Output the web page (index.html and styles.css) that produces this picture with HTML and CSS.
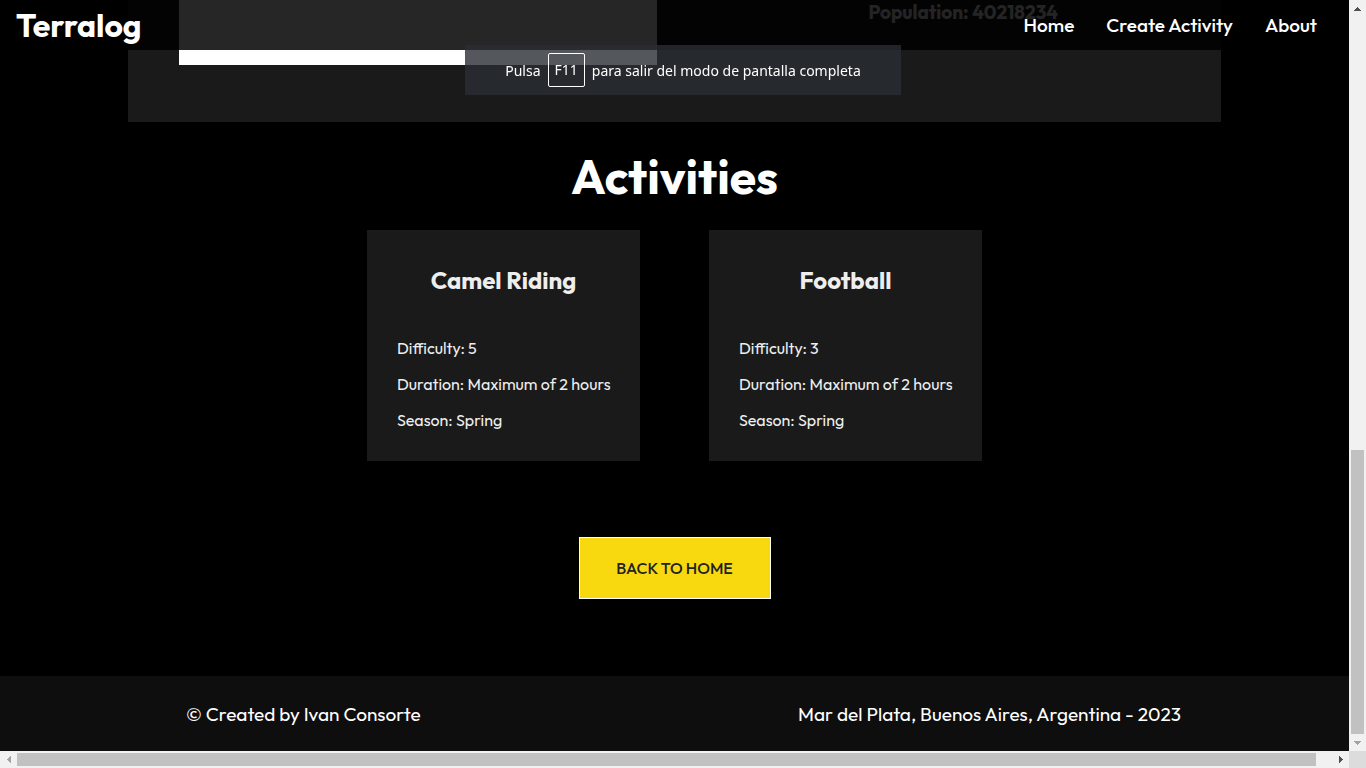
FILE: index.html
```html
<!DOCTYPE html>
<html lang="en">
<head>
<meta charset="utf-8">
<title>Terralog</title>
<link rel="stylesheet" href="styles.css">
</head>
<body>
<div class="window">
  <div class="viewport">
    <header class="navbar">
      <a class="brand" href="#">Terralog</a>
      <nav class="nav">
        <a href="#">Home</a>
        <a href="#">Create Activity</a>
        <a href="#">About</a>
      </nav>
    </header>
    <main class="page">
      <section class="country">
        <div class="flag"></div>
        <p class="population">Population: 40218234</p>
      </section>
      <section class="activities">
        <h2 class="activities-title">Activities</h2>
        <div class="cards">
          <article class="card">
            <h3 class="card-title">Camel Riding</h3>
            <p>Difficulty: 5</p>
            <p>Duration: Maximum of 2 hours</p>
            <p>Season: Spring</p>
          </article>
          <article class="card">
            <h3 class="card-title">Football</h3>
            <p>Difficulty: 3</p>
            <p>Duration: Maximum of 2 hours</p>
            <p>Season: Spring</p>
          </article>
        </div>
        <button class="back" type="button">BACK TO HOME</button>
      </section>
    </main>
    <footer class="footer">
      <span>© Created by Ivan Consorte</span>
      <span>Mar del Plata, Buenos Aires, Argentina - 2023</span>
    </footer>
  </div>
  <div class="bar bar-y">
    <button class="arrow" type="button" aria-label="Scroll up"><svg width="7" height="4" viewBox="0 0 7 4" shape-rendering="crispEdges"><path d="M3 0h1v1h1v1h1v1h1v1H0V3h1V2h1V1h1z" fill="#505050"/></svg></button>
    <div class="track"><div class="thumb"></div></div>
    <button class="arrow" type="button" aria-label="Scroll down"><svg width="7" height="4" viewBox="0 0 7 4" shape-rendering="crispEdges"><path d="M0 0h7v1H6v1H5v1H4v1H3V3H2V2H1V1H0z" fill="#a3a3a3"/></svg></button>
  </div>
  <div class="bar bar-x">
    <button class="arrow" type="button" aria-label="Scroll left"><svg width="4" height="7" viewBox="0 0 4 7" shape-rendering="crispEdges"><path d="M0 3h1V2h1V1h1V0h1v7H3V6H2V5H1V4H0z" fill="#a3a3a3"/></svg></button>
    <div class="track"><div class="thumb"></div></div>
    <button class="arrow" type="button" aria-label="Scroll right"><svg width="4" height="7" viewBox="0 0 4 7" shape-rendering="crispEdges"><path d="M0 0h1v1h1v1h1v1h1v1H3v1H2v1H1v1H0z" fill="#505050"/></svg></button>
  </div>
  <div class="corner"></div>
</div>
<div class="toast" role="status"><span>Pulsa</span><kbd>F11</kbd><span>para salir del modo de pantalla completa</span></div>
</body>
</html>
```
FILE: styles.css
```css
* { box-sizing: border-box; margin: 0; padding: 0; }

body {
  background: #000;
  color: #fff;
  font-family: Outfit, Lato, sans-serif;
  overflow: hidden;
}

a { color: inherit; text-decoration: none; }

.window {
  display: grid;
  grid-template: minmax(0, 1fr) 17px / minmax(0, 1fr) 17px;
  height: 100vh;
}

.viewport {
  position: relative;
  display: flex;
  flex-direction: column;
  overflow: hidden;
}

.navbar {
  position: absolute;
  inset: 0 0 auto;
  z-index: 1;
  display: flex;
  align-items: center;
  justify-content: space-between;
  height: 50px;
  padding: 0 32px 0 16px;
  background: rgba(0, 0, 0, 0.85);
}

.brand { font-size: 32px; font-weight: 700; }

.nav {
  display: flex;
  gap: 32px;
  font-size: 19px;
  font-weight: 500;
}

.page { flex: 1; }

.country {
  display: flex;
  justify-content: space-between;
  width: 81%;
  margin: 0 auto;
  padding: 0 163px 57px 51px;
  background: #1a1a1a;
}

.flag {
  width: 478px;
  height: 65px;
  background: #fff;
}

.population {
  color: #eee;
  font-size: 19px;
  line-height: 24px;
  font-weight: 700;
}

.activities {
  display: flex;
  flex-direction: column;
  align-items: center;
  padding-top: 24px;
}

.activities-title {
  font-size: 48px;
  line-height: 60px;
  font-weight: 700;
}

.cards {
  display: flex;
  gap: 69px;
  margin-top: 24px;
}

.card {
  width: 273px;
  padding: 30px 30px 23px;
  background: #1a1a1a;
  color: #eee;
  font-size: 16px;
  line-height: 36px;
  white-space: nowrap;
}

.card-title {
  margin-bottom: 30px;
  font-size: 24px;
  line-height: 40px;
  font-weight: 700;
  text-align: center;
}

.back {
  min-width: 192px;
  height: 62px;
  margin-top: 76px;
  border: 1px solid #fff;
  background: #f8d90f;
  color: #222;
  font: 500 16px Outfit, Lato, sans-serif;
}

.footer {
  display: flex;
  align-items: center;
  justify-content: space-between;
  height: 75px;
  padding: 0 168px 0 186px;
  background: #0e0e0e;
  font-size: 19px;
}

.bar { display: flex; background: #f1f1f1; }
.bar-y { flex-direction: column; }

.arrow {
  display: flex;
  flex: 0 0 17px;
  align-items: center;
  justify-content: center;
  min-height: 17px;
  border: 0;
  background: none;
}

.track { display: flex; flex: 1; }
.bar-y .track { flex-direction: column; justify-content: flex-end; padding: 0 2px; }
.bar-x .track { padding: 2px 0; }
.thumb { background: #c1c1c1; }
.bar-y .thumb { height: 284px; }
.bar-x .thumb { width: 1299px; }
.corner { background: #dcdcdc; }

.toast {
  position: fixed;
  top: 45px;
  left: 50%;
  z-index: 2;
  display: flex;
  align-items: center;
  justify-content: center;
  gap: 7px;
  width: 436px;
  height: 50px;
  transform: translateX(-50%);
  background: rgba(41, 45, 51, 0.8);
  font: 14px "Noto Sans", sans-serif;
  white-space: nowrap;
}

.toast kbd {
  padding: 0 6px;
  border: 1px solid #fff;
  border-radius: 2px;
  font: inherit;
  line-height: 32px;
}
```
